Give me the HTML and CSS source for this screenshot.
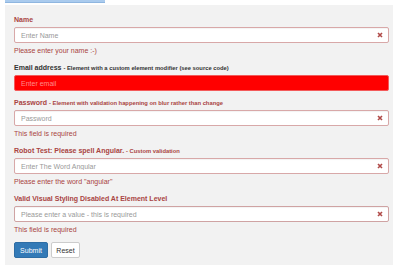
FILE: index.html
```html
<!DOCTYPE html>
<html lang="en">
<head>
    <meta charset="UTF-8">
    <title>Validation Form</title>
    <link rel="stylesheet" href="styles.css">
</head>
<body>
    <div class="tab-edge"></div>
    <div class="well">
        <form>
            <div class="form-group has-error">
                <label>Name</label>
                <div class="field">
                    <input type="text" placeholder="Enter Name">
                    <svg class="x" viewBox="0 0 6 6"><path d="M1 1L5 5M5 1L1 5"/></svg>
                </div>
                <span class="help-block">Please enter your name :-)</span>
            </div>

            <div class="form-group">
                <label class="plain">Email address <small>- Element with a custom element modifier (see source code)</small></label>
                <div class="field">
                    <input type="email" class="custom-error" placeholder="Enter email">
                </div>
            </div>

            <div class="form-group has-error">
                <label>Password <small>- Element with validation happening on blur rather than change</small></label>
                <div class="field">
                    <input type="password" placeholder="Password">
                    <svg class="x" viewBox="0 0 6 6"><path d="M1 1L5 5M5 1L1 5"/></svg>
                </div>
                <span class="help-block">This field is required</span>
            </div>

            <div class="form-group has-error">
                <label>Robot Test: Please spell Angular. <small>- Custom validation</small></label>
                <div class="field">
                    <input type="text" placeholder="Enter The Word Angular">
                    <svg class="x" viewBox="0 0 6 6"><path d="M1 1L5 5M5 1L1 5"/></svg>
                </div>
                <span class="help-block">Please enter the word "angular"</span>
            </div>

            <div class="form-group has-error">
                <label>Valid Visual Styling Disabled At Element Level</label>
                <div class="field">
                    <input type="text" class="muted-border" placeholder="Please enter a value - this is required">
                    <svg class="x" viewBox="0 0 6 6"><path d="M1 1L5 5M5 1L1 5"/></svg>
                </div>
                <span class="help-block">This field is required</span>
            </div>

            <div class="actions">
                <button type="button" class="btn btn-primary">Submit</button>
                <button type="button" class="btn btn-default">Reset</button>
            </div>
        </form>
    </div>
</body>
</html>
```

FILE: styles.css
```css
body {
    margin: 0;
    background: #fff;
    font-family: "Liberation Sans", Arial, sans-serif;
    font-size: 7px;
    color: #333;
}
.tab-edge {
    width: 100px;
    height: 2px;
    margin-left: 5px;
    background: #aacbee;
    border-bottom: 1px solid #8fb6e0;
}
.well {
    margin: 2px 0 0 5px;
    width: 379px;
    padding: 10px 0 20px 9px;
    background: #f2f2f2;
}
.form-group {
    margin-bottom: 7px;
}
label {
    display: block;
    height: 10px;
    line-height: 10px;
    margin-bottom: 2px;
    font-weight: bold;
    color: #a94442;
}
label.plain {
    color: #333;
}
label small {
    font-size: 5.8px;
}
.field {
    position: relative;
    width: 375px;
}
input {
    box-sizing: border-box;
    display: block;
    width: 375px;
    height: 16px;
    padding: 0 6px;
    font-family: inherit;
    font-size: 7px;
    background: #fff;
    border: 1px solid #d8a8a8;
    border-radius: 2px;
    box-shadow: inset 0 1px 1px rgba(0, 0, 0, 0.05);
    outline: none;
}
input::placeholder {
    color: #999;
}
input.custom-error {
    background: #ff0000;
    border-color: #f45a5a;
}
input.custom-error::placeholder {
    color: #ff8c8c;
}
input.muted-border {
    border-color: #cfa3a3;
}
.x {
    position: absolute;
    right: 6px;
    top: 5px;
    width: 6px;
    height: 6px;
    stroke: #b04a48;
    stroke-width: 1.6;
    fill: none;
}
.help-block {
    display: block;
    margin-top: 3px;
    height: 10px;
    line-height: 10px;
    color: #a94442;
}
.actions {
    display: flex;
    gap: 3px;
}
.btn {
    height: 16px;
    padding: 0;
    font-family: inherit;
    font-size: 7px;
    border-radius: 2px;
    border: 1px solid #ccc;
    cursor: pointer;
}
.btn-primary {
    width: 34px;
    background: #337ab7;
    border-color: #2e6da4;
    color: #fff;
}
.btn-default {
    width: 29px;
    background: #fff;
    color: #333;
}
```
